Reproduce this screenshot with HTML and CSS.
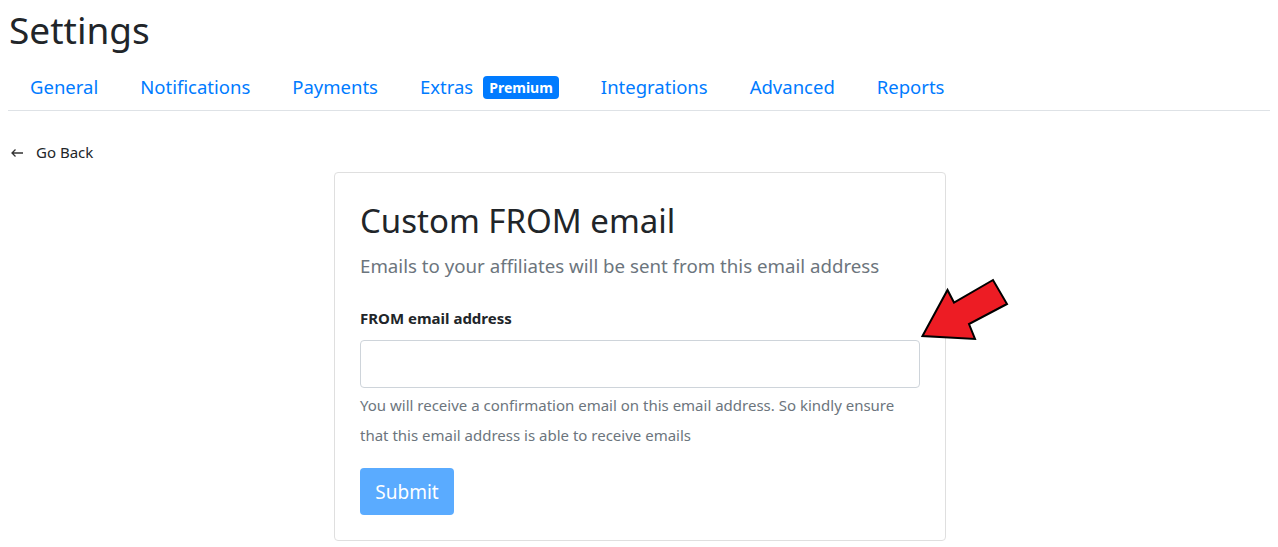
FILE: index.html
```html
<!DOCTYPE html>
<html>
<head>
<meta charset="utf-8">
<link rel="stylesheet" href="styles.css">
</head>
<body>
<h1 class="page-title">Settings</h1>
<nav class="tabs">
  <a class="tab" href="#">General</a>
  <a class="tab" href="#">Notifications</a>
  <a class="tab" href="#">Payments</a>
  <a class="tab" href="#">Extras <span class="badge">Premium</span></a>
  <a class="tab" href="#">Integrations</a>
  <a class="tab" href="#">Advanced</a>
  <a class="tab" href="#">Reports</a>
</nav>
<a class="back" href="#"><svg class="arrow" width="14" height="10" viewBox="0 0 14 10"><path d="M13 5H2M5.5 1.5L2 5l3.5 3.5" fill="none" stroke="#333" stroke-width="1.3"/></svg>Go Back</a>
<div class="card-wrap">
  <div class="card">
    <h2 class="card-title">Custom FROM email</h2>
    <p class="lead">Emails to your affiliates will be sent from this email address</p>
    <label class="label">FROM email address</label>
    <input class="input" type="text">
    <p class="help">You will receive a confirmation email on this email address. So kindly ensure that this email address is able to receive emails</p>
    <button class="btn">Submit</button>
  </div>
</div>
<svg class="pointer" width="100" height="70" viewBox="0 0 100 70">
  <polygon points="7.5,61 32.5,15 39,27.5 78,5 92,29 54,49 60,64" fill="#ed1c24" stroke="#000" stroke-width="2" stroke-linejoin="miter"/>
</svg>
</body>
</html>
```
FILE: styles.css
```css
body {
  margin: 8px;
  font-family: "Noto Sans", "Open Sans", sans-serif;
  color: #212529;
  background: #fff;
}
.page-title {
  margin: 0;
  font-size: 37px;
  font-weight: 400;
  line-height: 44px;
  padding-left: 1px;
}
.tabs {
  display: flex;
  border-bottom: 1px solid #dee2e6;
  margin-top: 16px;
  height: 42px;
  align-items: center;
  padding-left: 22px;
}
.tab {
  color: #007bff;
  text-decoration: none;
  font-size: 18.5px;
  margin-right: 42px;
  display: flex;
  align-items: center;
  padding-bottom: 6px;
}
.badge {
  display: inline-block;
  background: #007bff;
  color: #fff;
  font-size: 14px;
  font-weight: 700;
  border-radius: 4px;
  padding: 2px 6px 2px;
  margin-left: 10px;
  margin-top: 3px;
  line-height: 19px;
}
.back {
  display: flex;
  align-items: center;
  margin-top: 30px;
  color: #212529;
  text-decoration: none;
  font-size: 15px;
  line-height: 22px;
  padding-left: 2px;
}
.arrow {
  margin-right: 12px;
  margin-top: 2px;
}
.card-wrap {
  display: flex;
  justify-content: center;
  margin-top: 9px;
  padding-left: 2px;
}
.card {
  width: 560px;
  border: 1px solid #dfdfdf;
  border-radius: 4px;
  padding: 26px 25px 25px;
}
.card-title {
  margin: 0;
  font-size: 33px;
  font-weight: 400;
  line-height: 44px;
}
.lead {
  margin: 9px 0 0;
  font-size: 18.7px;
  color: #6c757d;
  line-height: 28px;
}
.label {
  display: block;
  margin-top: 28px;
  font-size: 15px;
  font-weight: 700;
  line-height: 20px;
}
.input {
  display: block;
  box-sizing: border-box;
  width: 100%;
  height: 48px;
  margin-top: 12px;
  border: 1px solid #ced4da;
  border-radius: 4px;
}
.help {
  margin: 2px 0 0;
  font-size: 15px;
  line-height: 30px;
  color: #6c757d;
}
.btn {
  margin-top: 18px;
  background: #5aabff;
  color: #fff;
  border: none;
  border-radius: 4px;
  font-family: inherit;
  font-size: 19px;
  width: 94px;
  height: 47px;
  padding: 0;
}
.pointer {
  position: absolute;
  left: 915px;
  top: 275px;
}
```
